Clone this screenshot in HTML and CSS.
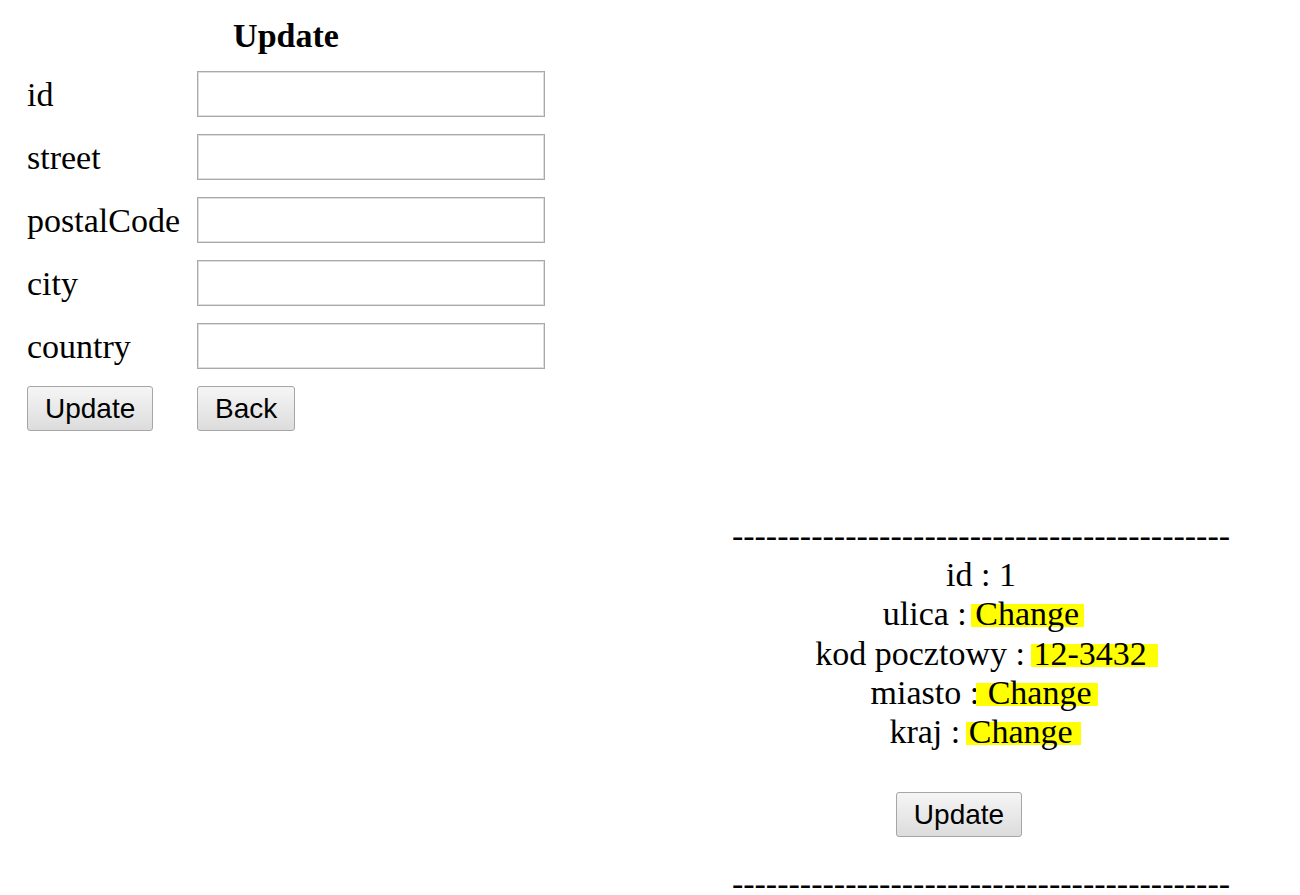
FILE: index.html
```html
<!DOCTYPE html>
<html lang="pl">
<head>
<meta charset="utf-8">
<title>Update</title>
<link rel="stylesheet" href="styles.css">
</head>
<body>
<div class="page">
  <form class="edit">
    <h1 class="title">Update</h1>
    <div class="fields">
      <label class="label" for="f-id">id</label>
      <input class="field" id="f-id" type="text">
      <label class="label" for="f-street">street</label>
      <input class="field" id="f-street" type="text">
      <label class="label" for="f-postal">postalCode</label>
      <input class="field" id="f-postal" type="text">
      <label class="label" for="f-city">city</label>
      <input class="field" id="f-city" type="text">
      <label class="label" for="f-country">country</label>
      <input class="field" id="f-country" type="text">
      <button class="btn" type="button">Update</button>
      <button class="btn" type="button">Back</button>
    </div>
  </form>

  <section class="list">
    <div class="sep">--------------------------------------------</div>
    <div class="entry">
      <p class="line">id : 1</p>
      <p class="line">ulica : <span class="hl hl-street">Change</span></p>
      <p class="line">kod pocztowy : <span class="hl hl-code">12-3432</span></p>
      <p class="line">miasto : <span class="hl hl-city">Change</span></p>
      <p class="line">kraj : <span class="hl hl-country">Change</span></p>
      <div class="actions">
        <button class="btn btn-shift" type="button">Update</button>
      </div>
    </div>
    <div class="sep">--------------------------------------------</div>
  </section>
</div>
</body>
</html>
```

FILE: styles.css
```css
html, body {
  margin: 0;
  padding: 0;
  background: #ffffff;
}

body {
  font-family: "Liberation Serif", "Times New Roman", serif;
  font-size: 34px;
  color: #000000;
}

.page {
  display: grid;
  grid-template-columns: 518px 600px;
  column-gap: 136px;
  align-items: start;
  padding: 16px 0 0 27px;
}

.edit {
  margin: 0;
}

.title {
  margin: 0 0 16px;
  font-size: 34px;
  font-weight: bold;
  line-height: 39px;
  text-align: center;
}

.fields {
  display: grid;
  grid-template-columns: 170px 348px;
  grid-auto-rows: 46px;
  row-gap: 17px;
}

.label {
  align-self: start;
  margin-top: 4px;
  line-height: 39px;
}

.field {
  box-sizing: border-box;
  width: 348px;
  height: 46px;
  margin: 0;
  border: 1px solid #a9a9a9;
  box-shadow: inset 0 0 0 1px #dedede;
  background: #ffffff;
  font-family: "Liberation Sans", Arial, sans-serif;
  font-size: 28px;
}

.btn {
  justify-self: start;
  box-sizing: border-box;
  height: 45px;
  margin: 0;
  padding: 0 17px;
  border: 1px solid #a6a6a6;
  border-radius: 3px;
  background: linear-gradient(#f5f5f5, #e9e9e9 50%, #dcdcdc);
  color: #000000;
  font-family: "Liberation Sans", Arial, sans-serif;
  font-size: 28px;
  line-height: 1;
}

.list {
  margin-top: 500px;
  text-align: center;
  line-height: 39.2px;
}

.line {
  margin: 0;
}

.hl {
  background: linear-gradient(transparent 24%, #ffff00 24%, #ffff00 87%, transparent 87%);
}

.hl-street {
  padding: 0 5px 0 4px;
  margin: 0 -5px 0 -4px;
}

.hl-code {
  padding: 0 11px 0 2px;
  margin: 0 -11px 0 -2px;
}

.hl-city {
  padding: 0 7px 0 12px;
  margin: 0 -7px 0 -12px;
}

.hl-country {
  padding: 0 8px 0 3px;
  margin: 0 -8px 0 -3px;
}

.actions {
  display: flex;
  justify-content: center;
  margin: 41px 0 27px;
}

.btn-shift {
  margin-right: 44px;
}
```
